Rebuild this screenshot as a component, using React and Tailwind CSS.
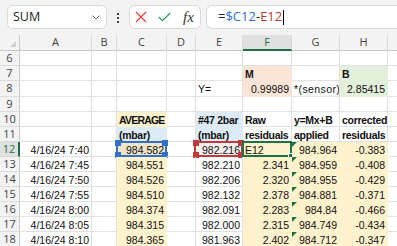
import React from 'react';

const cols = ['w-[72px]', 'w-[25px]', 'w-[50px]', 'w-[29px]', 'w-[47px]', 'w-[49px]', 'w-[48px]', 'w-[48px]', 'w-[30px]'];
const letters = ['A', 'B', 'C', 'D', 'E', 'F', 'G', 'H', ''];

const PEACH = 'bg-[#fce4d6] border-[#fce4d6]';
const GREEN = 'bg-[#e2efda] border-[#e2efda]';
const CREAM = 'bg-[#fff2cc] border-[#fff2cc]';
const BLUE = 'bg-[#ddebf7] border-[#ddebf7]';

const data = [
  ['4/16/24 7:40', '984.582', '982.216', 'E12', '984.964', '-0.383'],
  ['4/16/24 7:45', '984.551', '982.210', '2.341', '984.959', '-0.408'],
  ['4/16/24 7:50', '984.526', '982.206', '2.320', '984.955', '-0.429'],
  ['4/16/24 7:55', '984.510', '982.132', '2.378', '984.881', '-0.371'],
  ['4/16/24 8:00', '984.374', '982.091', '2.283', '984.84', '-0.466'],
  ['4/16/24 8:05', '984.315', '982.000', '2.315', '984.749', '-0.434'],
  ['4/16/24 8:10', '984.365', '981.963', '2.402', '984.712', '-0.347'],
];

function buildRows() {
  const rows = [
    { n: 6, h: 'h-[15px]', cells: {} },
    { n: 7, h: 'h-[15px]', cells: { 5: { t: 'M', b: true, bg: PEACH }, 7: { t: 'B', b: true, bg: GREEN } } },
    {
      n: 8,
      h: 'h-[16px]',
      cells: {
        4: { t: 'Y=' },
        5: { t: '0.99989', r: true, bg: PEACH },
        6: { t: '*(sensor) +', wide: true },
        7: { t: '2.85415', r: true, bg: GREEN },
      },
    },
    { n: 9, h: 'h-[15px]', cells: {} },
    {
      n: 10,
      h: 'h-[15px]',
      cells: {
        2: { t: 'AVERAGE', b: true, bg: CREAM, tight: true },
        4: { t: '#47 2bar', b: true, bg: BLUE },
        5: { t: 'Raw', b: true },
        6: { t: 'y=Mx+B', b: true },
        7: { t: 'corrected', b: true },
      },
    },
    {
      n: 11,
      h: 'h-[15px]',
      cells: {
        2: { t: '(mbar)', b: true, bg: BLUE },
        4: { t: '(mbar)', b: true, bg: BLUE },
        5: { t: 'residuals', b: true },
        6: { t: 'applied', b: true },
        7: { t: 'residuals', b: true },
      },
    },
  ];
  data.forEach((d, i) => {
    const first = i === 0;
    rows.push({
      n: 12 + i,
      h: 'h-[15px]',
      active: first,
      cells: {
        0: { t: d[0], r: true },
        2: { t: d[1], r: true, bg: first ? 'bg-[#efe5c9] border-[#fff2cc]' : CREAM, ref: first ? 'blue' : null },
        4: { t: d[2], r: true, bg: first ? 'bg-[#f7eeee]' : '', ref: first ? 'red' : null },
        5: { t: d[3], r: !first, bg: CREAM, ref: first ? 'edit' : null },
        6: { t: d[4], r: true, bg: CREAM, tri: true },
        7: { t: d[5], r: true, bg: CREAM },
      },
    });
  });
  return rows;
}

function Corners({ color }) {
  return (
    <>
      <span className={`absolute -left-[3px] -top-[3px] h-[6px] w-[6px] ${color}`} />
      <span className={`absolute -right-[3px] -top-[3px] h-[6px] w-[6px] ${color}`} />
      <span className={`absolute -left-[3px] -bottom-[3px] h-[6px] w-[6px] ${color}`} />
      <span className={`absolute -right-[3px] -bottom-[3px] h-[6px] w-[6px] ${color}`} />
    </>
  );
}

function Cell({ w, c }) {
  const spec = c || {};
  const border = spec.bg ? spec.bg : 'border-[#e1e1e1]';
  let track = '';
  if (spec.tight) track = 'tracking-[-0.8px]';
  else if (spec.b) track = 'tracking-[-0.3px]';
  else if (spec.wide) track = 'tracking-[0.4px]';
  return (
    <div className={`relative box-border h-full shrink-0 border-b border-r ${w} ${border}`}>
      <div
        className={`h-full overflow-hidden whitespace-nowrap px-[2px] pt-[2px] leading-[13px] text-[10.5px] text-[#111] ${
          spec.r ? 'text-right' : 'text-left'
        } ${spec.b ? 'font-bold' : ''} ${track}`}
      >
        {spec.t}
      </div>
      {spec.tri && (
        <svg className="absolute left-0 top-0" width="5" height="5" viewBox="0 0 5 5">
          <polygon points="0,0 5,0 0,5" fill="#1e7145" />
        </svg>
      )}
      {spec.ref === 'blue' && (
        <div className="absolute -inset-[1px] border-2 border-[#3570c8]">
          <Corners color="bg-[#3570c8]" />
        </div>
      )}
      {spec.ref === 'red' && (
        <div className="absolute -left-[2px] -top-[1px] -right-[1px] -bottom-[1px] border-2 border-[#c0393f]">
          <Corners color="bg-[#c0393f]" />
        </div>
      )}
      {spec.ref === 'edit' && (
        <div className="absolute -inset-[1px] border-2 border-[#1e7145]">
          <span className="absolute -bottom-[4px] -right-[4px] h-[6px] w-[6px] border border-white bg-[#1e7145]" />
        </div>
      )}
    </div>
  );
}

export default function App() {
  const rows = buildRows();
  return (
    <div className="h-[246px] w-[397px] overflow-hidden bg-white" style={{ fontFamily: '"Liberation Sans", Arial, sans-serif' }}>
      {/* formula bar */}
      <div className="flex h-[35px] items-start bg-[#f3f3f3] pt-[5px]">
        <div className="ml-[7px] flex h-[24px] w-[100px] items-center justify-between rounded-[6px] border border-[#d9d9d9] bg-white pl-[5px] pr-[6px]">
          <span className="text-[12.5px] text-[#222]" style={{ fontFamily: '"Open Sans", sans-serif' }}>SUM</span>
          <svg width="8" height="5" viewBox="0 0 8 5">
            <path d="M0.5 0.5 L4 4 L7.5 0.5" fill="none" stroke="#666" strokeWidth="1" />
          </svg>
        </div>
        <div className="flex w-[22px] flex-col items-center gap-[2px] pt-[8px]">
          <span className="h-[2px] w-[2px] bg-[#444]" />
          <span className="h-[2px] w-[2px] bg-[#444]" />
          <span className="h-[2px] w-[2px] bg-[#444]" />
        </div>
        <div className="flex h-[24px] w-[72px] items-center rounded-[6px] border border-[#d9d9d9] bg-white pl-[5px]">
          <svg width="12" height="12" viewBox="0 0 12 12">
            <path d="M1 1 L11 11 M11 1 L1 11" stroke="#e0423f" strokeWidth="1.2" />
          </svg>
          <svg className="ml-[11px]" width="13" height="10" viewBox="0 0 13 10">
            <path d="M0.8 5 L4.5 8.7 L12.2 1" fill="none" stroke="#2e9e52" strokeWidth="1.2" />
          </svg>
          <span
            className="ml-[12px] text-[15px] italic leading-none text-[#333]"
            style={{ fontFamily: '"Liberation Serif", serif' }}
          >
            fx
          </span>
        </div>
        <div className="ml-[5px] flex h-[24px] flex-1 items-center rounded-l-[6px] border border-r-0 border-[#d9d9d9] bg-white pl-[11px]">
          <span className="text-[13px] text-[#222]" style={{ fontFamily: '"Open Sans", sans-serif' }}>
            =<span className="text-[#2f6fd1]">$C12</span>-<span className="text-[#c0392b]">E12</span>
          </span>
          <span className="ml-[1px] h-[15px] w-[1px] bg-black" />
        </div>
      </div>

      {/* column headers */}
      <div className="flex h-[16px] bg-[#f3f3f3]" style={{ fontFamily: '"Open Sans", sans-serif' }}>
        <div className="relative box-border h-full w-[20px] shrink-0 border-b border-r border-[#c8c8c8]">
          <svg className="absolute bottom-[3px] right-[3px]" width="6" height="6" viewBox="0 0 6 6">
            <polygon points="6,0 6,6 0,6" fill="#d0d0d0" />
          </svg>
        </div>
        {letters.map((l, i) => (
          <div
            key={i}
            className={`box-border flex h-full shrink-0 items-center justify-center border-r text-[11px] ${cols[i]} ${
              l === 'F'
                ? 'border-b-2 border-r-[#d6d6d6] border-b-[#1e7145] bg-[#e0e0e0] text-[#1e7145]'
                : 'border-b border-[#d9d9d9] border-b-[#c8c8c8] text-[#444]'
            }`}
          >
            {l}
          </div>
        ))}
      </div>

      {/* grid */}
      {rows.map((row) => (
        <div key={row.n} className={`flex ${row.h}`}>
          <div
            className={`box-border flex h-full w-[20px] shrink-0 items-center justify-center border-b text-[11px] ${
              row.active
                ? 'border-r-2 border-b-[#d6d6d6] border-r-[#1e7145] bg-[#e0e0e0] text-[#1e7145]'
                : 'border-r border-b-[#dcdcdc] border-r-[#c8c8c8] bg-[#f3f3f3] text-[#444]'
            }`}
            style={{ fontFamily: '"Open Sans", sans-serif' }}
          >
            {row.n}
          </div>
          {cols.map((w, i) => (
            <Cell key={i} w={w} c={row.cells[i]} />
          ))}
        </div>
      ))}
    </div>
  );
}
